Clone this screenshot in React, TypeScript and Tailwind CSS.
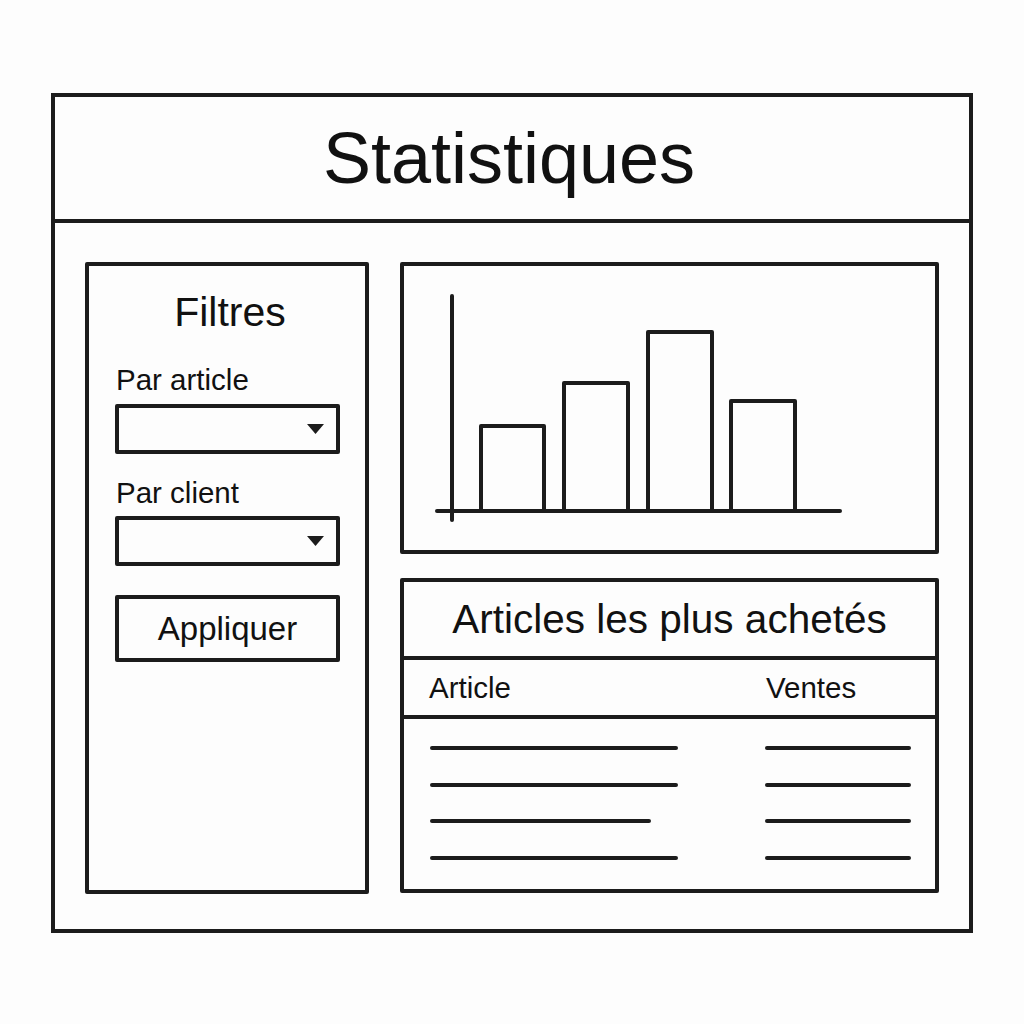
const BARS = [
  { x: 77, w: 63, top: 160 },
  { x: 160, w: 64, top: 117 },
  { x: 244, w: 64, top: 66 },
  { x: 327, w: 64, top: 135 },
];

const ROWS = [248, 248, 221, 248];

function Select() {
  return (
    <div className="ml-[26px] w-[225px] h-[50px] border-4 border-[#1c1c1c] rounded-[2px] flex items-center justify-end pr-[12px]">
      <svg width="17" height="10" viewBox="0 0 17 10">
        <polygon points="0,0 17,0 8.5,10" fill="#1c1c1c" />
      </svg>
    </div>
  );
}

function Filters() {
  return (
    <div className="w-[284px] h-[632px] border-4 border-[#1c1c1c] rounded-[2px] flex flex-col">
      <p className="mt-[26px] pl-[6px] text-center text-[41px] leading-none">Filtres</p>
      <p className="mt-[32px] ml-[27px] text-[29.5px] leading-none">Par article</p>
      <div className="mt-[9px]">
        <Select />
      </div>
      <p className="mt-[24px] ml-[27px] text-[29.5px] leading-none">Par client</p>
      <div className="mt-[9px]">
        <Select />
      </div>
      <div className="mt-[29px] ml-[26px] w-[225px] h-[67px] border-4 border-[#1c1c1c] rounded-[2px] flex items-center justify-center">
        <span className="text-[33px] leading-none">Appliquer</span>
      </div>
    </div>
  );
}

function Chart() {
  return (
    <div className="h-[292px] border-4 border-[#1c1c1c] rounded-[2px]">
      <svg width="531" height="284" viewBox="0 0 531 284">
        <g stroke="#1c1c1c" strokeWidth="4" fill="none" strokeLinecap="round">
          <line x1="48" y1="30" x2="48" y2="254" />
          <line x1="33" y1="245" x2="436" y2="245" />
          {BARS.map((b) => (
            <path
              key={b.x}
              d={`M${b.x} 245 V${b.top} H${b.x + b.w} V245`}
              strokeLinejoin="round"
              strokeLinecap="butt"
            />
          ))}
        </g>
      </svg>
    </div>
  );
}

function TopArticles() {
  return (
    <div className="h-[315px] border-4 border-[#1c1c1c] rounded-[2px] flex flex-col">
      <div className="h-[78px] border-b-4 border-[#1c1c1c] flex items-center justify-center">
        <span className="text-[40.5px] leading-none">Articles les plus achetés</span>
      </div>
      <div className="h-[59px] border-b-4 border-[#1c1c1c] flex items-center text-[29.5px] leading-none">
        <span className="ml-[25px] w-[337px]">Article</span>
        <span>Ventes</span>
      </div>
      <div className="pt-[27px] flex flex-col gap-[32.5px]">
        {ROWS.map((w, i) => (
          <div key={i} className="flex items-center">
            <div className="ml-[26px] h-[4px] rounded-full bg-[#1c1c1c]" style={{ width: w }} />
            <div className="ml-auto mr-[24px] w-[146px] h-[4px] rounded-full bg-[#1c1c1c]" />
          </div>
        ))}
      </div>
    </div>
  );
}

export default function App() {
  return (
    <div className="w-[1024px] h-[1024px] bg-[#fdfdfd] text-[#111] pt-[93px] pl-[51px] font-['Liberation_Sans',Arial,sans-serif]">
      <div className="w-[922px] h-[840px] border-4 border-[#1c1c1c] flex flex-col">
        <header className="h-[126px] border-b-4 border-[#1c1c1c] flex items-center justify-center">
          <h1 className="text-[72px] leading-none pr-[6px]">Statistiques</h1>
        </header>
        <div className="flex gap-[31px] pt-[39px] pl-[30px]">
          <Filters />
          <div className="w-[539px] flex flex-col gap-[24px]">
            <Chart />
            <TopArticles />
          </div>
        </div>
      </div>
    </div>
  );
}
